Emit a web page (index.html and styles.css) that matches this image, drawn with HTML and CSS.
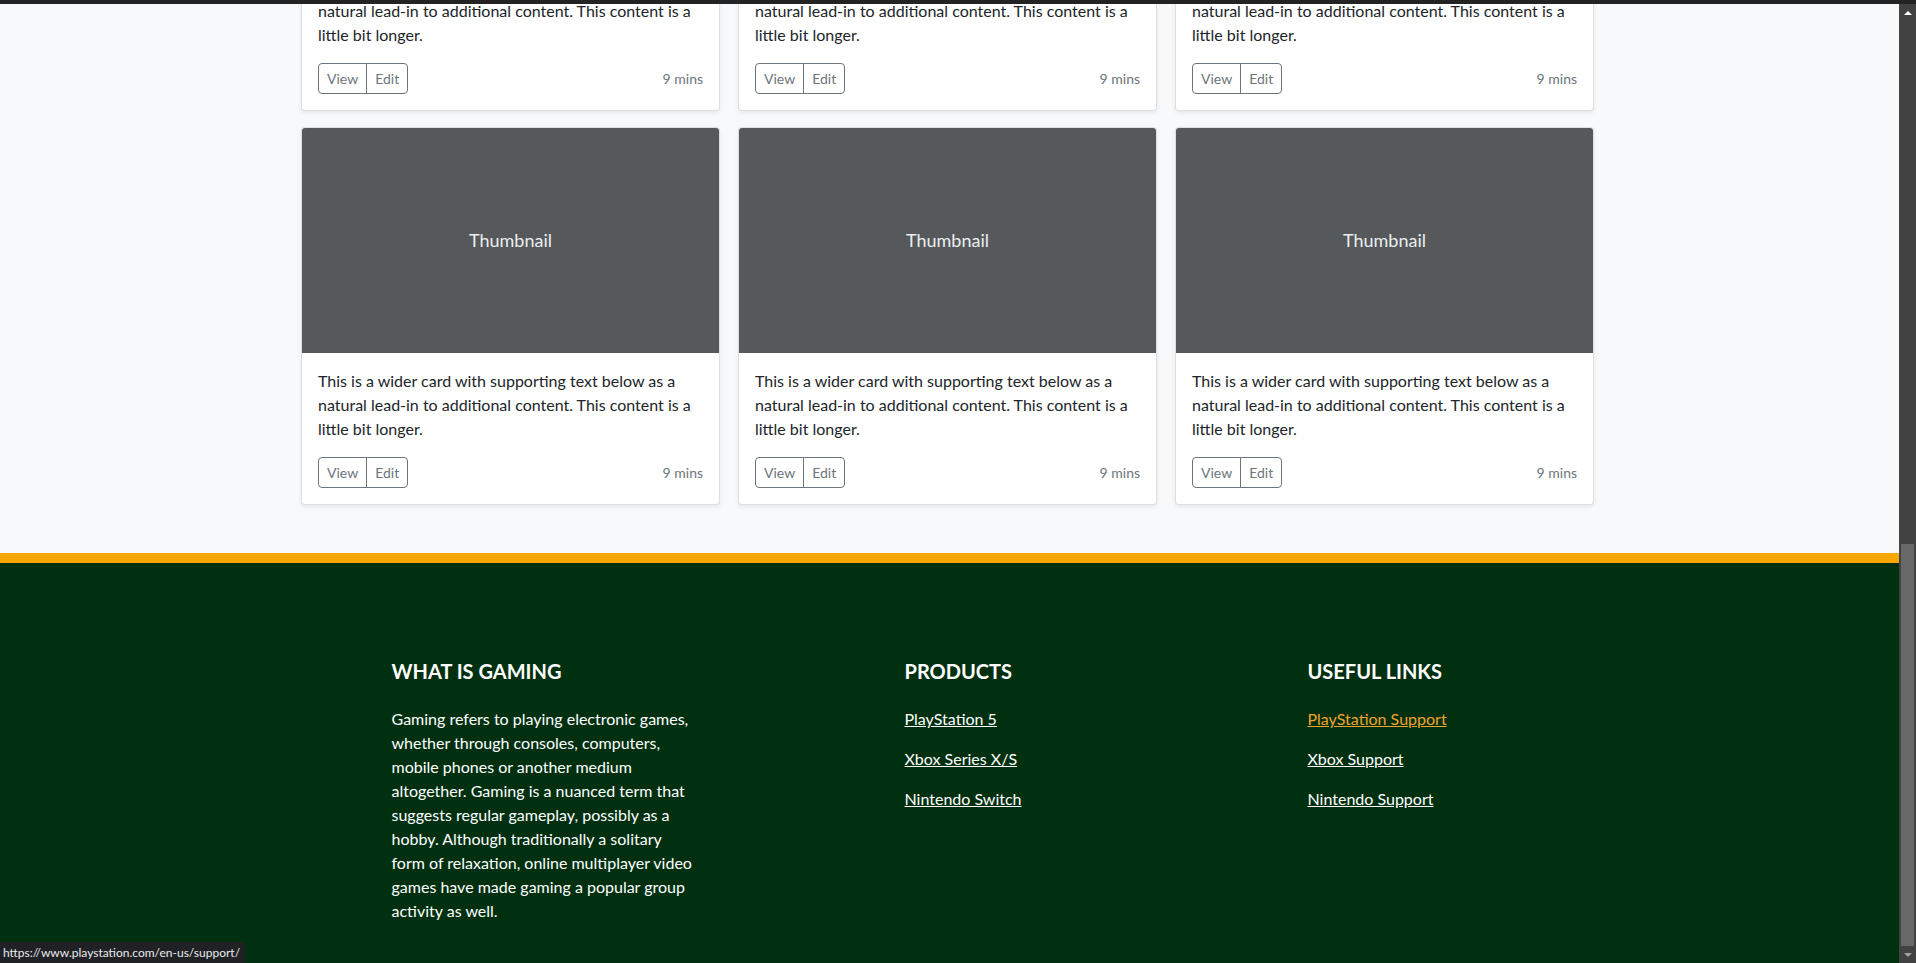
FILE: index.html
```html
<!DOCTYPE html>
<html lang="en">
<head>
<meta charset="utf-8">
<title>Gaming</title>
<link rel="stylesheet" href="styles.css">
</head>
<body>
<div class="topbar"></div>
<div class="window">
  <div class="viewport">
    <main class="album">
      <div class="container">
        <div class="grid">
          <div class="card">
            <div class="thumb">Thumbnail</div>
            <div class="card-body">
              <p class="card-text">This is a wider card with supporting text below as a natural lead-in to additional content. This content is a little bit longer.</p>
              <div class="card-foot">
                <div class="btn-group"><button class="btn">View</button><button class="btn">Edit</button></div>
                <small class="muted">9 mins</small>
              </div>
            </div>
          </div>
          <div class="card">
            <div class="thumb">Thumbnail</div>
            <div class="card-body">
              <p class="card-text">This is a wider card with supporting text below as a natural lead-in to additional content. This content is a little bit longer.</p>
              <div class="card-foot">
                <div class="btn-group"><button class="btn">View</button><button class="btn">Edit</button></div>
                <small class="muted">9 mins</small>
              </div>
            </div>
          </div>
          <div class="card">
            <div class="thumb">Thumbnail</div>
            <div class="card-body">
              <p class="card-text">This is a wider card with supporting text below as a natural lead-in to additional content. This content is a little bit longer.</p>
              <div class="card-foot">
                <div class="btn-group"><button class="btn">View</button><button class="btn">Edit</button></div>
                <small class="muted">9 mins</small>
              </div>
            </div>
          </div>
          <div class="card">
            <div class="thumb">Thumbnail</div>
            <div class="card-body">
              <p class="card-text">This is a wider card with supporting text below as a natural lead-in to additional content. This content is a little bit longer.</p>
              <div class="card-foot">
                <div class="btn-group"><button class="btn">View</button><button class="btn">Edit</button></div>
                <small class="muted">9 mins</small>
              </div>
            </div>
          </div>
          <div class="card">
            <div class="thumb">Thumbnail</div>
            <div class="card-body">
              <p class="card-text">This is a wider card with supporting text below as a natural lead-in to additional content. This content is a little bit longer.</p>
              <div class="card-foot">
                <div class="btn-group"><button class="btn">View</button><button class="btn">Edit</button></div>
                <small class="muted">9 mins</small>
              </div>
            </div>
          </div>
          <div class="card">
            <div class="thumb">Thumbnail</div>
            <div class="card-body">
              <p class="card-text">This is a wider card with supporting text below as a natural lead-in to additional content. This content is a little bit longer.</p>
              <div class="card-foot">
                <div class="btn-group"><button class="btn">View</button><button class="btn">Edit</button></div>
                <small class="muted">9 mins</small>
              </div>
            </div>
          </div>
        </div>
      </div>
    </main>
    <footer class="footer">
      <div class="footer-inner">
        <div class="fcol">
          <h5 class="fhead">WHAT IS GAMING</h5>
          <p class="ftext">Gaming refers to playing electronic games, whether through consoles, computers, mobile phones or another medium altogether. Gaming is a nuanced term that suggests regular gameplay, possibly as a hobby. Although traditionally a solitary form of relaxation, online multiplayer video games have made gaming a popular group activity as well.</p>
        </div>
        <div class="fcol">
          <h5 class="fhead">PRODUCTS</h5>
          <ul class="flinks">
            <li><a href="#">PlayStation 5</a></li>
            <li><a href="#">Xbox Series X/S</a></li>
            <li><a href="#">Nintendo Switch</a></li>
          </ul>
        </div>
        <div class="fcol">
          <h5 class="fhead">USEFUL LINKS</h5>
          <ul class="flinks">
            <li><a href="#" class="hover">PlayStation Support</a></li>
            <li><a href="#">Xbox Support</a></li>
            <li><a href="#">Nintendo Support</a></li>
          </ul>
        </div>
      </div>
    </footer>
    <div class="status">https://www.playstation.com/en-us/support/</div>
  </div>
  <div class="scrollbar">
    <div class="arrow up"></div>
    <div class="track"><div class="thumb-bar"></div></div>
    <div class="arrow down"></div>
  </div>
</div>
</body>
</html>
```
FILE: styles.css
```css
* { box-sizing: border-box; }
html, body { margin: 0; padding: 0; }
body {
  height: 963px;
  overflow: hidden;
  display: flex;
  flex-direction: column;
  font-family: "Lato", "Noto Sans", sans-serif;
  font-size: 16px;
  line-height: 1.5;
  color: #212529;
  background: #f8f9fa;
}
.topbar { height: 4px; background: #232323; flex: none; }
.window { flex: 1; display: flex; min-height: 0; }
.viewport {
  flex: 1;
  position: relative;
  overflow: hidden;
  display: flex;
  flex-direction: column;
  background: #f8f9fa;
}
.album { margin-top: -271px; padding-bottom: 48px; }
.container { width: 1293px; margin-left: calc(50% - 648.5px); }
.grid { display: grid; grid-template-columns: repeat(3, 1fr); column-gap: 18px; row-gap: 16px; }
.card {
  background: #fff;
  border: 1px solid rgba(0,0,0,.125);
  border-radius: 4px;
  box-shadow: 0 2px 4px rgba(0,0,0,.075);
  overflow: hidden;
}
.thumb {
  height: 225px;
  background: #55595c;
  color: #eceeef;
  font-size: 18px;
  display: flex;
  align-items: center;
  justify-content: center;
  padding-bottom: 1px;
}
.card-body { padding: 16px; }
.card-text { margin: 0 0 16px; }
.card-foot { display: flex; justify-content: space-between; align-items: center; }
.btn-group { display: flex; }
.btn {
  font-family: inherit;
  font-size: 14px;
  line-height: 21px;
  padding: 4px 8px;
  color: #6c757d;
  background: transparent;
  border: 1px solid #6c757d;
  margin: 0;
}
.btn:first-child { border-radius: 4px 0 0 4px; }
.btn:last-child { border-radius: 0 4px 4px 0; margin-left: -1px; }
.muted { color: #6c757d; font-size: 14px; }
.footer {
  flex: 1;
  background: #003010;
  border-top: 10px solid #f8a602;
  color: #fff;
  padding-top: 96px;
}
.footer-inner {
  width: 1296px;
  margin: 0 auto;
  padding-left: 90px;
  display: grid;
  grid-template-columns: 513px 403px auto;
}
.fhead {
  font-size: 20px;
  font-weight: 700;
  line-height: 24px;
  margin: 0 0 24px;
}
.ftext { margin: 0; max-width: 303px; }
.flinks { list-style: none; margin: 0; padding: 0; }
.flinks li { margin-bottom: 16px; }
.flinks a { color: #fff; text-decoration: underline; }
.flinks a.hover { color: #f0a22e; }
.status {
  position: absolute;
  left: 0;
  bottom: 0;
  height: 21px;
  padding: 0 5px 0 3px;
  background: #202124;
  color: #e8eaed;
  font-size: 12px;
  line-height: 21px;
  border-top-right-radius: 3px;
}
.scrollbar {
  width: 17px;
  flex: none;
  background: #424242;
  display: flex;
  flex-direction: column;
}
.arrow { height: 17px; flex: none; display: flex; align-items: center; justify-content: center; }
.arrow.up::before {
  content: "";
  border-left: 4px solid transparent;
  border-right: 4px solid transparent;
  border-bottom: 4px solid #fff;
}
.arrow.down::before {
  content: "";
  border-left: 4px solid transparent;
  border-right: 4px solid transparent;
  border-top: 4px solid #a3a3a3;
}
.track { flex: 1; display: flex; flex-direction: column; justify-content: flex-end; }
.thumb-bar { height: 402px; margin: 0 2px; background: #686868; }
```
